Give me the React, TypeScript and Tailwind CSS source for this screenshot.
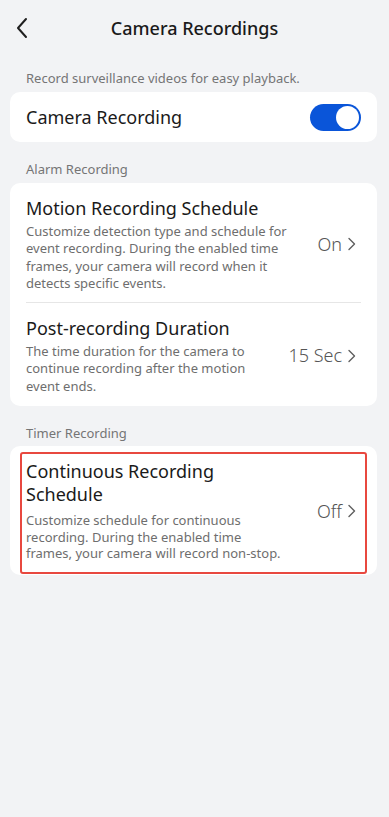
import React from "react";

const Chevron = () => (
  <svg width="9" height="14" viewBox="0 0 9 14" fill="none" className="ml-[5px] shrink-0">
    <path d="M2 1.5 L7.5 7 L2 12.5" stroke="#5f5f5f" strokeWidth="1.4" strokeLinecap="round" strokeLinejoin="round" />
  </svg>
);

function Row({ title, desc, value }: { title: React.ReactNode; desc: React.ReactNode; value: string }) {
  return (
    <div className="flex items-center">
      <div className="shrink-0">
        <div className="whitespace-nowrap text-[18px] leading-[24px] text-[#1a1a1a]">{title}</div>
        <div className="mt-[3px] whitespace-nowrap text-[13px] leading-[17.3px] text-[#6e6e6e]">{desc}</div>
      </div>
      <div className="ml-auto flex items-center whitespace-nowrap text-[18px] font-light text-[#555]">
        {value}
        <Chevron />
      </div>
    </div>
  );
}

export default function App() {
  return (
    <div className="min-h-[817px] w-[389px] bg-[#f2f3f5] font-['Noto_Sans',sans-serif]">
      <div className="relative flex h-[56px] items-center justify-center">
        <svg width="14" height="22" viewBox="0 0 14 22" fill="none" className="absolute left-[15px] top-[17px]">
          <path d="M11 2 L3 11 L11 20" stroke="#1f1f1f" strokeWidth="2" strokeLinecap="round" strokeLinejoin="round" />
        </svg>
        <div className="text-[18px] font-medium text-[#1a1a1a]">Camera Recordings</div>
      </div>

      <div className="mt-[13px] pl-[26px] text-[13px] leading-[18px] text-[#757575]">
        Record surveillance videos for easy playback.
      </div>

      <div className="ml-[10px] mt-[5px] flex h-[50px] w-[367px] items-center rounded-[10px] bg-white pl-[16px] pr-[16px]">
        <div className="text-[18px] text-[#1a1a1a]">Camera Recording</div>
        <div className="ml-auto flex h-[27px] w-[51px] items-center justify-end rounded-full bg-[#0a55d9] pr-[2px]">
          <div className="h-[23px] w-[23px] rounded-full bg-white" />
        </div>
      </div>

      <div className="mt-[18px] pl-[26px] text-[13px] leading-[18px] text-[#757575]">Alarm Recording</div>

      <div className="ml-[10px] mt-[5px] w-[367px] rounded-[10px] bg-white pl-[16px] pr-[21px]">
        <div className="pb-[10px] pt-[13px]">
          <Row
            title="Motion Recording Schedule"
            desc={
              <>
                Customize detection type and schedule for
                <br />
                event recording. During the enabled time
                <br />
                frames, your camera will record when it
                <br />
                detects specific events.
              </>
            }
            value="On"
          />
        </div>
        <div className="mr-[-5px] h-px bg-[#e6e6e6]" />
        <div className="pb-[11px] pt-[13px]">
          <Row
            title="Post-recording Duration"
            desc={
              <>
                The time duration for the camera to
                <br />
                continue recording after the motion
                <br />
                event ends.
              </>
            }
            value="15 Sec"
          />
        </div>
      </div>

      <div className="mt-[18px] pl-[26px] text-[13px] leading-[18px] text-[#757575]">Timer Recording</div>

      <div className="ml-[10px] mt-[4px] w-[367px] rounded-[10px] bg-white px-[10px] pb-[1px] pt-[6px]">
        <div className="rounded-[3px] border-2 border-[#e8483f] pb-[10px] pl-[4px] pr-[9px] pt-[6px]">
          <div className="flex items-center">
            <div className="shrink-0">
              <div className="whitespace-nowrap text-[18px] leading-[22.5px] text-[#1a1a1a]">
                Continuous Recording
                <br />
                Schedule
              </div>
              <div className="mt-[7px] whitespace-nowrap text-[13px] leading-[16.7px] text-[#6e6e6e]">
                Customize schedule for continuous
                <br />
                recording. During the enabled time
                <br />
                frames, your camera will record non-stop.
              </div>
            </div>
            <div className="ml-auto flex items-center whitespace-nowrap text-[18px] font-light text-[#555]">
              Off
              <Chevron />
            </div>
          </div>
        </div>
      </div>
    </div>
  );
}
